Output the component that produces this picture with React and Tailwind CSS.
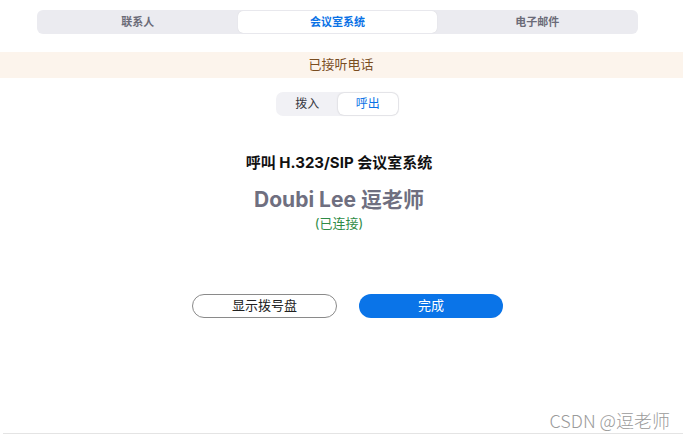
export default function App() {
  const font = { fontFamily: '"Inter", "Noto Sans CJK SC", sans-serif' };
  return (
    <div className="relative w-[683px] h-[440px] bg-white overflow-hidden" style={font}>
      <div className="pt-[10px] px-[37px] pr-[45px]">
        <div className="flex h-[24px] rounded-[6px] bg-[#ebebf0] p-[1px]">
          <div className="flex-1 flex items-center justify-center text-[11px] font-semibold text-[#6b6b78]">联系人</div>
          <div className="flex-1 flex items-center justify-center text-[11px] font-semibold text-[#0a72e6] bg-white rounded-[5px] shadow-[0_0_1px_rgba(0,0,0,0.15)]">会议室系统</div>
          <div className="flex-1 flex items-center justify-center text-[11px] font-semibold text-[#6b6b78]">电子邮件</div>
        </div>
      </div>
      <div className="mt-[18px] h-[26px] bg-[#fcf4ec] flex items-center justify-center text-[13px] text-[#7a4d1f] pr-[1px]">已接听电话</div>
      <div className="mt-[14px] flex justify-center pr-[8px]">
        <div className="flex w-[123px] h-[24px] rounded-[7px] bg-[#f1f1f5] p-[1px]">
          <div className="flex-1 flex items-center justify-center text-[12px] text-[#3a3a44]">拨入</div>
          <div className="flex-1 flex items-center justify-center text-[12px] text-[#0a72e6] bg-white rounded-[6px] shadow-[0_0_2px_rgba(0,0,0,0.2)]">呼出</div>
        </div>
      </div>
      <div className="mt-[38px] text-center text-[15px] font-bold text-[#111] leading-[18px] pr-[5px]">呼叫 H.323/SIP 会议室系统</div>
      <div className="mt-[16px] text-center text-[21px] font-bold text-[#6f6f80] leading-[24px] pr-[5px]">Doubi Lee 逗老师</div>
      <div className="mt-[2px] text-center text-[13px] text-[#2e8b46] leading-[18px] pr-[5px]">(已连接)</div>
      <div className="mt-[62px] flex justify-center gap-[22px] pl-[12px]">
        <div className="w-[145px] h-[24px] rounded-full border border-[#8a8a8a] flex items-center justify-center text-[13px] text-[#222]">显示拨号盘</div>
        <div className="w-[144px] h-[24px] rounded-full bg-[#0a74e8] flex items-center justify-center text-[13px] text-white">完成</div>
      </div>
      <div className="absolute right-[13px] top-[407px] text-[18px] font-light text-[#9a9a9a]" style={{ fontFamily: '"Noto Sans CJK SC", sans-serif' }}>CSDN @逗老师</div>
      <div className="absolute left-[3px] right-0 top-[433px] h-[1px] bg-[#e4e4e4]"></div>
    </div>
  );
}
